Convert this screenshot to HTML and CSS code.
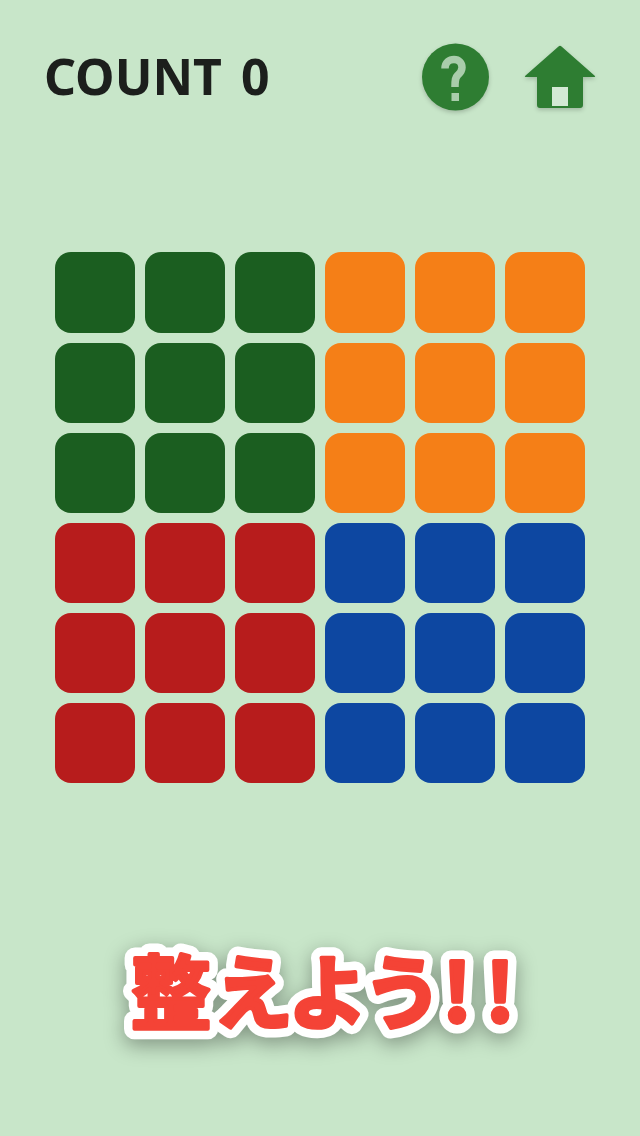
FILE: index.html
```html
<!DOCTYPE html>
<html lang="ja">
<head>
    <meta charset="UTF-8">
    <title>COUNT</title>
    <link rel="stylesheet" href="styles.css">
</head>
<body>
<div class="header">
    <p class="count">COUNT 0</p>
    <div class="buttons">
        <svg class="icon" width="70" height="70" viewBox="0 0 70 70">
            <circle cx="35.500" cy="35" r="33.500" fill="#2e7d32"/>
            <path class="mark" d="M25 26.500C25 20 29.500 17.500 34 17.500C39 17.500 42 21 42 25.500C42 29.500 39.500 31.500 37.500 33.500C35.500 35.500 35 37.500 35 45"/>
            <rect class="mark-dot" x="31.500" y="51" width="7.500" height="8"/>
        </svg>
        <svg class="icon" width="72" height="66" viewBox="0 0 72 66">
            <path d="M37.500 2.500 71 32a.6.6 0 0 1-.4 1H59V61a3 3 0 0 1-3 3H16a3 3 0 0 1-3-3V33H1.400a.6.6 0 0 1-.4-1L34.500 2.500a2.200 2.200 0 0 1 3 0z" fill="#2e7d32"/>
            <rect x="28" y="43" width="16" height="19" fill="#d3e9d4"/>
        </svg>
    </div>
</div>

<div class="board">
    <div class="cell green"></div><div class="cell green"></div><div class="cell green"></div>
    <div class="cell orange"></div><div class="cell orange"></div><div class="cell orange"></div>
    <div class="cell green"></div><div class="cell green"></div><div class="cell green"></div>
    <div class="cell orange"></div><div class="cell orange"></div><div class="cell orange"></div>
    <div class="cell green"></div><div class="cell green"></div><div class="cell green"></div>
    <div class="cell orange"></div><div class="cell orange"></div><div class="cell orange"></div>
    <div class="cell red"></div><div class="cell red"></div><div class="cell red"></div>
    <div class="cell blue"></div><div class="cell blue"></div><div class="cell blue"></div>
    <div class="cell red"></div><div class="cell red"></div><div class="cell red"></div>
    <div class="cell blue"></div><div class="cell blue"></div><div class="cell blue"></div>
    <div class="cell red"></div><div class="cell red"></div><div class="cell red"></div>
    <div class="cell blue"></div><div class="cell blue"></div><div class="cell blue"></div>
</div>

<svg class="slogan" width="640" height="130" viewBox="0 0 640 130">
    <g class="slogan-outline"><use href="#slogan-text"/></g>
    <g class="slogan-fill"><text id="slogan-text" x="171 253 328 403 457 500" y="102" text-anchor="middle">整えよう!!</text></g>
</svg>
</body>
</html>
```

FILE: styles.css
```css
html, body {
    margin: 0;
    padding: 0;
}

body {
    width: 640px;
    height: 1136px;
    overflow: hidden;
    background: #c8e6c9;
    font-family: "Noto Sans CJK JP", "Noto Sans", sans-serif;
}

.header {
    display: flex;
    align-items: center;
    justify-content: space-between;
    height: 70px;
    padding: 42px 44px 0 44px;
}

.count {
    margin: 0 0 2px 0;
    font-family: "Noto Sans", sans-serif;
    font-size: 50px;
    font-weight: 700;
    word-spacing: 6px;
    color: #1c1f1c;
}

.buttons {
    display: flex;
    align-items: center;
    gap: 34px;
}

.icon {
    display: block;
    filter: drop-shadow(0 2px 2px rgba(0, 0, 0, 0.2));
}

.mark {
    fill: none;
    stroke: #a9cdab;
    stroke-width: 7.500;
}

.mark-dot {
    fill: #a9cdab;
}

.board {
    display: grid;
    grid-template-columns: repeat(6, 80px);
    grid-template-rows: 81px repeat(5, 80px);
    gap: 10px;
    width: 530px;
    margin: 140px auto 0 auto;
}

.cell {
    border-radius: 16px;
}

.green { background: #1b5e20; }
.orange { background: #f57f17; }
.red { background: #b71c1c; }
.blue { background: #0d47a1; }

.slogan {
    display: block;
    margin-top: 137px;
    filter: drop-shadow(0 6px 10px rgba(0, 0, 0, 0.35));
    font-size: 80px;
    font-weight: 700;
}

.slogan-outline {
    fill: #ffffff;
    stroke: #ffffff;
    stroke-width: 21;
    stroke-linejoin: round;
}

.slogan-fill {
    fill: #f44336;
    stroke: #f44336;
    stroke-width: 4;
    stroke-linejoin: round;
}
```
